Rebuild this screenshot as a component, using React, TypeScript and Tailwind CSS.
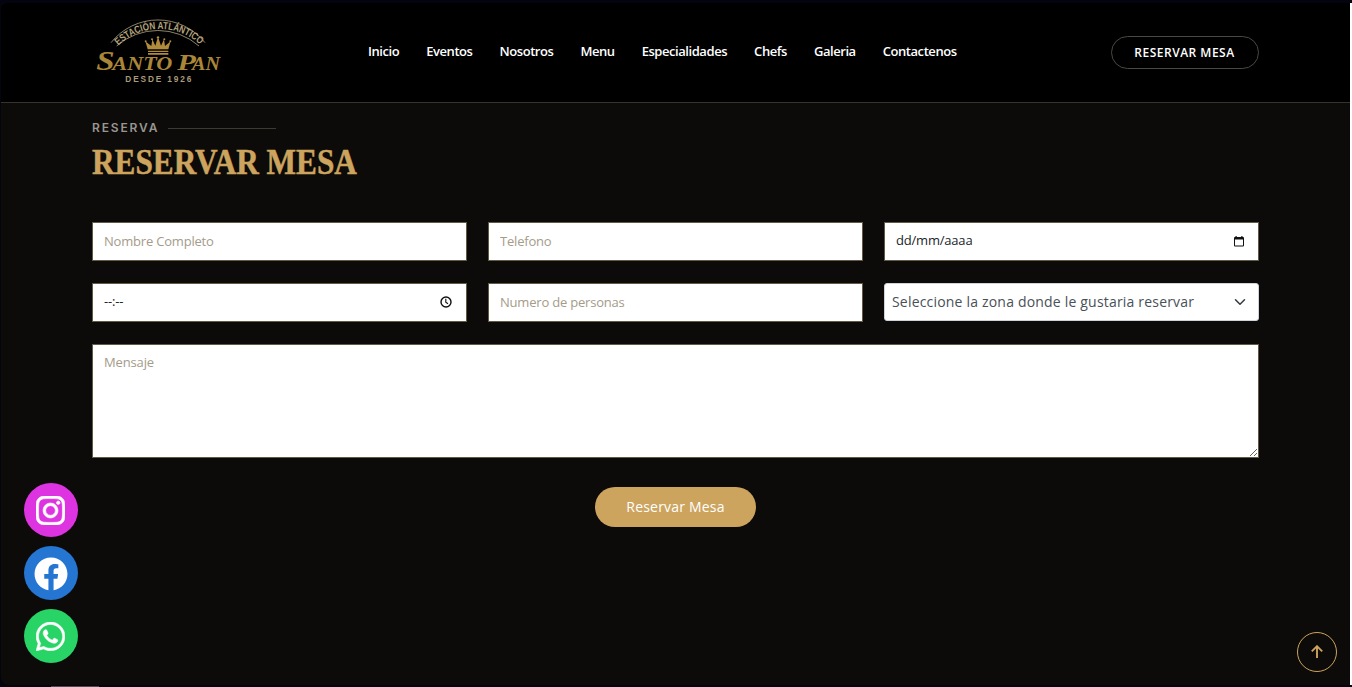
import React from "react";

const links = ["Inicio", "Eventos", "Nosotros", "Menu", "Especialidades", "Chefs", "Galeria", "Contactenos"];

const field =
  "block w-full h-[39px] border border-[#625a45] bg-white px-[11px] pb-[1px] text-[13px] tracking-[-0.2px] text-[#212529] placeholder:text-[#a49b89] outline-none";

function Logo() {
  return (
    <svg className="block w-[145px] h-[80px]" viewBox="0 0 435 240" fill="none">
      <g stroke="#8d8268" strokeWidth="3">
        <path d="M78 98A180 180 0 0 1 360 98" />
        <path d="M95 108A187 187 0 0 1 342 108" />
      </g>
      <path id="logo-arc" d="M98 109A178 178 0 0 1 350 109" />
      <text fill="#b3a37b" fontFamily="'Liberation Sans Narrow','Liberation Sans',sans-serif" fontWeight="700" fontSize="31">
        <textPath href="#logo-arc" startOffset="3" textLength="270" lengthAdjust="spacingAndGlyphs">ESTACIÓN ATLÁNTICO</textPath>
      </text>
      <path
        fill="#b08b3c"
        d="M188 118L181 94L199 108L202 88L211 107L219 80L228 107L237 88L240 108L257 94L250 118ZM189 122H250V126H189ZM189 129H250V134H189Z"
      />
      <g fill="#b08b3c">
        <circle cx="182" cy="94" r="3" />
        <circle cx="201" cy="88" r="3" />
        <circle cx="219" cy="82" r="3.5" />
        <circle cx="238" cy="88" r="3" />
        <circle cx="256" cy="94" r="3" />
      </g>
      <g fill="#ab8639" fontFamily="'Liberation Serif',serif" fontStyle="italic" fontWeight="700">
        <text x="34" y="181" fontSize="80" textLength="55" lengthAdjust="spacingAndGlyphs">S</text>
        <text x="82" y="180" fontSize="55" textLength="180" lengthAdjust="spacingAndGlyphs">ANTO</text>
        <text x="277" y="180" fontSize="72" textLength="56" lengthAdjust="spacingAndGlyphs">P</text>
        <text x="321" y="180" fontSize="55" textLength="84" lengthAdjust="spacingAndGlyphs">AN</text>
      </g>
      <g transform="translate(121 217) scale(0.86 1)">
        <text fill="#a89b7b" fontFamily="'Liberation Sans Narrow','Liberation Sans',sans-serif" fontWeight="700" fontSize="29" textLength="230" lengthAdjust="spacing">
          DESDE 1926
        </text>
      </g>
    </svg>
  );
}

function Clock() {
  return (
    <svg className="w-[12px] h-[12px]" viewBox="0 0 12 12" fill="none" stroke="#111" strokeWidth="1.4">
      <circle cx="6" cy="6" r="5" />
      <path d="M5.8 2.8V6.2L8 7.8" strokeWidth="1.1" />
    </svg>
  );
}

function Calendar() {
  return (
    <svg className="w-[10px] h-[11px]" viewBox="0 0 10 11" fill="#111">
      <path fillRule="evenodd" d="M1.5 0H2.7V1H7.3V0H8.5V1H9Q10 1 10 2V9.5Q10 10.5 9 10.5H1Q0 10.5 0 9.5V2Q0 1 1 1H1.5ZM1 3.4V9.5H9V3.4Z" />
    </svg>
  );
}

function Instagram() {
  return (
    <svg className="w-[29px] h-[29px]" viewBox="0 0 448 448" fill="#fff" stroke="#fff" strokeWidth="10">
      <path transform="translate(0 -32)" d="M224.1 141c-63.6 0-114.9 51.3-114.9 114.9s51.3 114.9 114.9 114.9S339 319.5 339 255.9 287.7 141 224.1 141zm0 189.6c-41.1 0-74.7-33.5-74.7-74.7s33.5-74.7 74.7-74.7 74.7 33.5 74.7 74.7-33.6 74.7-74.7 74.7zm146.4-194.3c0 14.9-12 26.8-26.8 26.8-14.9 0-26.8-12-26.8-26.8s12-26.8 26.8-26.8 26.8 12 26.8 26.8zm76.1 27.2c-1.7-35.9-9.9-67.7-36.2-93.9-26.2-26.2-58-34.4-93.9-36.2-37-2.1-147.9-2.1-184.9 0-35.8 1.7-67.6 9.9-93.9 36.1s-34.4 58-36.2 93.9c-2.1 37-2.1 147.9 0 184.9 1.7 35.9 9.9 67.7 36.2 93.9s58 34.4 93.9 36.2c37 2.1 147.9 2.1 184.9 0 35.9-1.7 67.7-9.9 93.9-36.2 26.2-26.2 34.4-58 36.2-93.9 2.1-37 2.1-147.8 0-184.8zM398.8 388c-7.8 19.6-22.9 34.7-42.6 42.6-29.5 11.7-99.5 9-132.1 9s-102.7 2.6-132.1-9c-19.6-7.8-34.7-22.9-42.6-42.6-11.7-29.5-9-99.5-9-132.1s-2.6-102.7 9-132.1c7.8-19.6 22.9-34.7 42.6-42.6 29.5-11.7 99.5-9 132.1-9s102.7-2.6 132.1 9c19.6 7.8 34.7 22.9 42.6 42.6 11.7 29.5 9 99.5 9 132.1s2.7 102.7-9 132.1z" />
    </svg>
  );
}

function Facebook() {
  return (
    <svg className="w-[34px] h-[34px]" viewBox="0 0 512 512" fill="#fff">
      <path d="M504 256C504 119 393 8 256 8S8 119 8 256c0 123.78 90.69 226.38 209.25 245V327.69h-63V256h63v-54.64c0-62.15 37-96.48 93.67-96.48 27.14 0 55.52 4.84 55.52 4.84v61h-31.28c-30.8 0-40.41 19.12-40.41 38.73V256h68.78l-11 71.69h-57.78V501C413.31 482.38 504 379.78 504 256z" />
    </svg>
  );
}

function Whatsapp() {
  return (
    <svg className="w-[29px] h-[29px]" viewBox="0 0 448 448" fill="#fff" stroke="#fff" strokeWidth="8">
      <path transform="translate(0 -32)" d="M380.9 97.1C339 55.1 283.2 32 223.9 32c-122.4 0-222 99.6-222 222 0 39.1 10.2 77.3 29.6 111L0 480l117.7-30.9c32.4 17.7 68.9 27 106.1 27h.1c122.3 0 224.1-99.6 224.1-222 0-59.3-25.2-115-67.1-157zm-157 341.6c-33.2 0-65.7-8.9-94-25.7l-6.7-4-69.8 18.3L72 359.2l-4.4-7c-18.5-29.4-28.2-63.3-28.2-98.2 0-101.7 82.8-184.5 184.6-184.5 49.3 0 95.6 19.2 130.4 54.1 34.8 34.9 56.2 81.2 56.1 130.5 0 101.8-84.9 184.6-186.6 184.6zm101.2-138.2c-5.5-2.8-32.8-16.2-37.9-18-5.1-1.9-8.8-2.8-12.5 2.8-3.7 5.6-14.3 18-17.6 21.8-3.2 3.7-6.5 4.2-12 1.4-32.6-16.3-54-29.1-75.5-66-5.7-9.8 5.7-9.1 16.3-30.3 1.8-3.7.9-6.9-.5-9.7-1.4-2.8-12.5-30.1-17.1-41.2-4.5-10.8-9.1-9.3-12.5-9.5-3.2-.2-6.9-.2-10.6-.2-3.7 0-9.7 1.4-14.8 6.9-5.1 5.6-19.4 19-19.4 46.3 0 27.3 19.9 53.7 22.6 57.4 2.8 3.7 39.1 59.7 94.8 83.8 35.2 15.2 49 16.5 66.6 13.9 10.7-1.6 32.8-13.4 37.4-26.4 4.6-13 4.6-24.1 3.2-26.4-1.3-2.5-5-3.9-10.5-6.6z" />
    </svg>
  );
}

export default function App() {
  return (
    <div className="relative flex h-[687px] w-[1352px] flex-col overflow-hidden bg-[#03040f] pl-px pt-[3px] font-['Open_Sans',sans-serif]">
      <div className="flex h-[682px]">
        <div className="w-[1349px] rounded-bl-[8px] rounded-tl-[6px] bg-[#0c0b09]">
          <header className="flex h-[100px] rounded-tl-[6px] border-b border-[#37332a] bg-black">
            <div className="ml-[84px] mt-[7px] w-[145px]">
              <Logo />
            </div>
            <nav className="ml-[138px] mt-[38px] flex h-5 w-[743px] gap-[27px] whitespace-nowrap text-[13px] font-semibold leading-5 tracking-[-0.44px] text-white">
              {links.map((l) => (
                <a key={l} href="#">{l}</a>
              ))}
            </nav>
            <button className="mt-[33px] h-[33px] w-[148px] rounded-full border border-[#4d4841] pr-[1px] text-[12px] font-semibold tracking-[0.5px] text-white">
              RESERVAR MESA
            </button>
          </header>

          <main className="ml-[91px] w-[1167px]">
            <div className="flex h-[20px] items-center pt-[2px] mt-[14px]">
              <span className="w-[76px] font-['Inter',sans-serif] text-[12px] font-semibold leading-4 tracking-[1.85px] text-[#999692]">RESERVA</span>
              <span className="h-px w-[108px] bg-[#3d3a33]" />
            </div>
            <h1 className="mt-[2px] h-[46px] origin-left scale-x-[0.868] whitespace-nowrap font-['Liberation_Serif',serif] text-[36px] font-bold leading-[46px] text-[#cda45e] [-webkit-text-stroke:0.5px_#cda45e]">
              RESERVAR MESA
            </h1>

            <form className="mt-[37px]">
              <div className="grid grid-cols-3 gap-x-[21px] gap-y-[22px]">
                <input className={field} placeholder="Nombre Completo" />
                <input className={field} placeholder="Telefono" />
                <div className={field + " flex items-center justify-between"}>
                  <span className="pb-[1px]">dd/mm/aaaa</span>
                  <span className="mr-[3px]"><Calendar /></span>
                </div>
                <div className={field + " flex items-center justify-between"}>
                  <span>--:--</span>
                  <span className="mr-[3px]"><Clock /></span>
                </div>
                <input className={field} placeholder="Numero de personas" />
                <div className="flex h-[38px] items-center justify-between rounded-[3px] border border-[#ced4da] bg-white pl-[7px] pr-[12px] text-[14px] tracking-[0.19px] text-[#495057]">
                  <span className="whitespace-nowrap pb-[2px]">Seleccione la zona donde le gustaria reservar</span>
                  <svg className="h-[12px] w-[12px]" viewBox="0 0 16 16" fill="none" stroke="#343a40" strokeWidth="2" strokeLinecap="round" strokeLinejoin="round">
                    <path d="m2 5 6 6 6-6" />
                  </svg>
                </div>
              </div>
              <textarea
                placeholder="Mensaje"
                className="mt-[22px] block h-[114px] w-full resize border border-[#625a45] bg-white px-[11px] py-[8px] text-[13px] leading-[19.5px] tracking-[-0.15px] placeholder:text-[#a49b89] outline-none"
              />
              <button type="button" className="mx-auto mt-[29px] block h-[40px] w-[161px] rounded-full bg-[#cda45e] pb-[2px] text-[14px] font-medium tracking-[0.2px] text-white">
                Reservar Mesa
              </button>
            </form>
          </main>
        </div>
        <div className="w-[2px] bg-white" />
      </div>

      <div className="absolute left-6 top-[483px] flex flex-col gap-[9px]">
        <a href="#" className="flex size-[54px] items-center justify-center rounded-full bg-[#dd33e0] pr-[1px] pt-[1px]"><Instagram /></a>
        <a href="#" className="flex size-[54px] items-center justify-center rounded-full bg-[#2575d3] pt-[2px]"><Facebook /></a>
        <a href="#" className="flex size-[54px] items-center justify-center rounded-full bg-[#28d466] pr-[1px] pt-[1px]"><Whatsapp /></a>
      </div>

      <a href="#" className="absolute left-[1297px] top-[632px] flex size-[40px] items-center justify-center rounded-full border border-[#cda45e] pb-[1px] pr-[1px]">
        <svg className="h-[13px] w-[12px]" viewBox="0 0 12 13" fill="none" stroke="#cda45e" strokeWidth="1.9">
          <path d="M6 13V1.2M.8 6.4 6 1.2l5.2 5.2" />
        </svg>
      </a>
      <div className="absolute bottom-0 left-[51px] h-px w-[48px] bg-[#4b4b50]" />
    </div>
  );
}
